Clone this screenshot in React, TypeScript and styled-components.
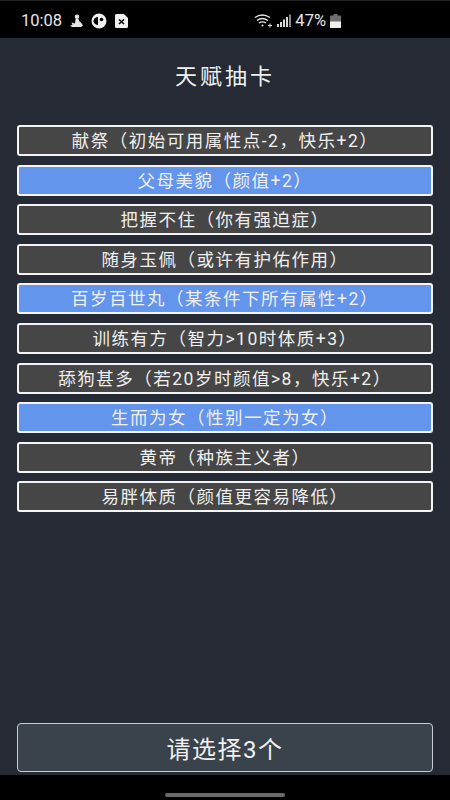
import React from 'react'
import styled, {createGlobalStyle} from 'styled-components'

const talents = [
  {label: '献祭（初始可用属性点-2，快乐+2）', selected: false},
  {label: '父母美貌（颜值+2）', selected: true},
  {label: '把握不住（你有强迫症）', selected: false},
  {label: '随身玉佩（或许有护佑作用）', selected: false},
  {label: '百岁百世丸（某条件下所有属性+2）', selected: true},
  {label: '训练有方（智力>10时体质+3）', selected: false},
  {label: '舔狗甚多（若20岁时颜值>8，快乐+2）', selected: false},
  {label: '生而为女（性别一定为女）', selected: true},
  {label: '黄帝（种族主义者）', selected: false},
  {label: '易胖体质（颜值更容易降低）', selected: false},
]

const GlobalStyle = createGlobalStyle`
  html, body {
    margin: 0;
    padding: 0;
    background: #000;
  }
  * {
    box-sizing: border-box;
  }
`

const Screen = styled.div`
  width: 450px;
  height: 800px;
  overflow: hidden;
  display: flex;
  flex-direction: column;
  background: #252a35;
  color: #f2f2f2;
  font-family: "Roboto", "Noto Sans CJK SC", sans-serif;
`

const StatusBar = styled.div`
  height: 38px;
  flex-shrink: 0;
  padding: 2px 109px 0 21px;
  display: flex;
  align-items: center;
  justify-content: space-between;
  background: #000;
  border-top: 1px solid #222;
`

const StatusGroup = styled.div<{$gap: number}>`
  display: flex;
  align-items: center;
  gap: ${p => p.$gap}px;
`

const StatusText = styled.span`
  font-size: 16.500px;
  color: #e6e6e6;
`

const Content = styled.main`
  flex: 1;
  padding: 0 17px;
  display: flex;
  flex-direction: column;
`

const Title = styled.h1`
  margin: 25px 0 34px;
  height: 28px;
  font-size: 22px;
  line-height: 28px;
  font-weight: 400;
  letter-spacing: 3px;
  text-align: center;
  color: #f0f0f0;
`

const TalentList = styled.div`
  display: flex;
  flex-direction: column;
  gap: 8.600px;
`

const TalentRow = styled.div<{$selected: boolean}>`
  height: 31px;
  padding-bottom: 2px;
  display: flex;
  align-items: center;
  justify-content: center;
  border: 2px solid #f4f4f4;
  border-radius: 3px;
  background: ${p => (p.$selected ? '#6495ed' : '#464646')};
  font-size: 17.500px;
  letter-spacing: 1.500px;
  color: #efefef;
  white-space: nowrap;
`

const ConfirmButton = styled.button`
  margin-top: auto;
  margin-bottom: 3px;
  height: 49px;
  border: 1px solid #c9ccd0;
  border-radius: 4px;
  background: #3a424c;
  color: #f0f0f0;
  font-family: inherit;
  font-size: 24px;
  letter-spacing: 1.500px;
`

const NavBar = styled.div`
  height: 25px;
  flex-shrink: 0;
  padding-bottom: 3px;
  display: flex;
  align-items: flex-end;
  justify-content: center;
  background: #000;
`

const HomePill = styled.div`
  width: 120px;
  height: 4px;
  border-radius: 2px;
  background: #6a6a6a;
`

function App() {
  return (
    <Screen>
      <GlobalStyle/>
      <StatusBar>
        <StatusGroup $gap={8}>
          <StatusText>10:08</StatusText>
          <svg width="13" height="13" viewBox="0 0 13 13" fill="#e6e6e6">
            <circle cx="7" cy="2.800" r="2.200"/>
            <path d="M5.500 5h3l1 2.500 1.500 1 2 3-2 1.500H2L0 11.500l2.500-.5L1.500 8.500 5 9.500z"/>
          </svg>
          <svg width="16" height="16" viewBox="0 0 16 16">
            <circle cx="8" cy="8" r="7.500" fill="#f0f0f0"/>
            <path d="M2.500 8.500A4.500 4.500 0 0 1 7 4v8A5 5 0 0 1 2.500 8.500z" fill="#000"/>
            <circle cx="10.500" cy="6.500" r="1.800" fill="#000"/>
          </svg>
          <svg width="13" height="14" viewBox="0 0 13 14">
            <path d="M1.500 0H9l4 4v8.500a1.500 1.500 0 0 1-1.500 1.500h-10A1.500 1.500 0 0 1 0 12.500v-11A1.500 1.500 0 0 1 1.500 0z" fill="#f0f0f0"/>
            <path d="M4 5.500l5 4.500M9 5.500L4 10" stroke="#000" strokeWidth="1.600"/>
          </svg>
        </StatusGroup>
        <StatusGroup $gap={4}>
          <svg width="19" height="14" viewBox="0 0 19 14" fill="none" stroke="#e6e6e6" strokeWidth="1.300">
            <path d="M1 3.500Q8-1.500 16 3.500M3 6.500Q8 2.500 14 6.500M5 9Q8 6.800 12 9"/>
            <circle cx="8.500" cy="11.500" r="1" fill="#e6e6e6" stroke="none"/>
            <path d="M14 11.500h4M16 9.500v4" strokeWidth="1"/>
          </svg>
          <svg width="14" height="13" viewBox="0 0 14 13" fill="#d8d8d8">
            <rect x="0" y="10" width="2" height="3"/>
            <rect x="3" y="8" width="2" height="5"/>
            <rect x="6" y="5.500" width="2" height="7.500"/>
            <rect x="9" y="3" width="2" height="10"/>
            <rect x="12" y="0.500" width="2" height="12.500" fill="#8a8a8a"/>
          </svg>
          <StatusText>47%</StatusText>
          <svg width="11" height="14" viewBox="0 0 11 14">
            <path d="M3.500 0h4v1.500H10a1 1 0 0 1 1 1V13a1 1 0 0 1-1 1H1a1 1 0 0 1-1-1V2.500a1 1 0 0 1 1-1h2.500z" fill="#6e6e6e"/>
            <path d="M0 7.500h11V13a1 1 0 0 1-1 1H1a1 1 0 0 1-1-1z" fill="#efefef"/>
          </svg>
        </StatusGroup>
      </StatusBar>
      <Content>
        <Title>天赋抽卡</Title>
        <TalentList>
          {talents.map(talent => (
            <TalentRow key={talent.label} $selected={talent.selected}>{talent.label}</TalentRow>
          ))}
        </TalentList>
        <ConfirmButton>请选择3个</ConfirmButton>
      </Content>
      <NavBar>
        <HomePill/>
      </NavBar>
    </Screen>
  )
}

export default App
